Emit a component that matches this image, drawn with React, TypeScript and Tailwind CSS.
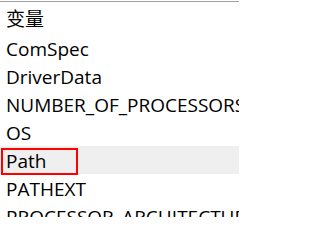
import React from "react";

const rows = [
  "变量",
  "ComSpec",
  "DriverData",
  "NUMBER_OF_PROCESSORS",
  "OS",
  "Path",
  "PATHEXT",
  "PROCESSOR_ARCHITECTURE",
];

export default function App() {
  return (
    <div className="w-[239px] h-[217px] overflow-hidden bg-white text-black" style={{ fontFamily: '"Open Sans", "Noto Sans CJK SC", sans-serif' }}>
      <div className="h-[1px] bg-white" />
      <div className="h-[1px] bg-[#a0a0a0]" />
      <div className="h-[4px]" />
      <div className="flex flex-col">
        {rows.map((r, i) => (
          <div
            key={r}
            className={`relative h-[28px] shrink-0 whitespace-nowrap pl-[6px] text-[19px] leading-[28px] pt-[1px] ${i === 5 ? "bg-[#efefef]" : ""}`}
          >
            <span className={i === 0 ? "relative -top-[2px]" : ""}>{r}</span>
            {i === 5 && (
              <div className="absolute left-[1px] top-[2px] w-[77px] h-[27px] border-2 border-[#ff0000]" />
            )}
          </div>
        ))}
      </div>
    </div>
  );
}
